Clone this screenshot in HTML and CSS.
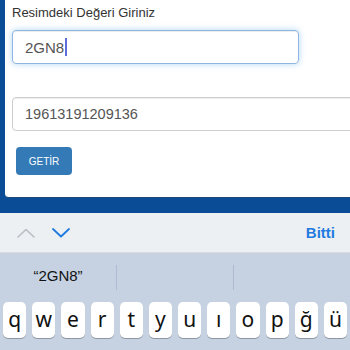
FILE: index.html
```html
<!DOCTYPE html>
<html>
<head>
<meta charset="utf-8">
<link rel="stylesheet" href="styles.css">
</head>
<body>
<div class="screen">
  <div class="frame">
    <div class="card">
      <div class="label">Resimdeki Değeri Giriniz</div>
      <div class="input focus"><span>2GN8</span><span class="caret"></span></div>
      <div class="input wide"><span>19613191209136</span></div>
      <div class="btn">GETİR</div>
    </div>
  </div>
  <div class="toolbar">
    <div class="arrows">
      <svg width="18" height="10" viewBox="0 0 18 10"><path d="M1 9 L9 1.5 L17 9" fill="none" stroke="#b9bdc3" stroke-width="1.6" stroke-linecap="round" stroke-linejoin="round"/></svg>
      <svg width="18" height="10" viewBox="0 0 18 10"><path d="M1 1 L9 8.5 L17 1" fill="none" stroke="#1f7ae0" stroke-width="1.8" stroke-linecap="round" stroke-linejoin="round"/></svg>
    </div>
    <div class="done">Bitti</div>
  </div>
  <div class="keyboard">
    <div class="suggest">
      <div class="sug">“2GN8”</div>
      <div class="sug sep"></div>
      <div class="sug sep"></div>
    </div>
    <div class="row">
      <div class="key">q</div><div class="key">w</div><div class="key">e</div><div class="key">r</div><div class="key">t</div><div class="key">y</div><div class="key">u</div><div class="key">ı</div><div class="key">o</div><div class="key">p</div><div class="key">ğ</div><div class="key">ü</div>
    </div>
  </div>
</div>
</body>
</html>
```

FILE: styles.css
```css
* { box-sizing: border-box; }
html, body { margin: 0; padding: 0; }
body {
  width: 350px;
  height: 350px;
  overflow: hidden;
  font-family: "Liberation Sans", Arial, sans-serif;
}
.screen { display: flex; flex-direction: column; width: 350px; height: 350px; }
.frame {
  background: #0a4d96;
  height: 213px;
  padding-left: 5px;
  padding-bottom: 15px;
}
.card {
  background: #fff;
  height: 198px;
  border-bottom-left-radius: 4px;
  border-bottom: 1px solid #1c4a7e;
  padding: 6px 0 0 7px;
  overflow: hidden;
}
.label {
  font-size: 13px;
  color: #333;
  line-height: 14px;
}
.input {
  margin-top: 10px;
  height: 34px;
  width: 287px;
  border: 1px solid #cfcfcf;
  border-radius: 4px;
  padding-left: 12px;
  display: flex;
  align-items: center;
  font-size: 15px;
  color: #555;
  box-shadow: inset 0 1px 1px rgba(0,0,0,0.075);
}
.input.focus {
  border-color: #8fb6e2;
  box-shadow: inset 0 1px 1px rgba(0,0,0,0.075), 0 0 6px rgba(102,175,233,0.5);
}
.caret {
  display: inline-block;
  width: 1.5px;
  height: 18px;
  background: #5b6fd6;
  margin-left: 1px;
}
.input.wide {
  margin-top: 33px;
  width: 360px;
  font-size: 14.5px;
}
.btn {
  margin-top: 16px;
  margin-left: 4px;
  width: 56px;
  height: 28px;
  background: #337ab7;
  border-radius: 4px;
  color: #fff;
  font-size: 10px;
  display: flex;
  align-items: center;
  justify-content: center;
}
.toolbar {
  height: 40px;
  background: #edf0f3;
  border-bottom: 1px solid #d8dde3;
  display: flex;
  align-items: center;
  justify-content: space-between;
  padding: 0 15px 0 17px;
}
.arrows { display: flex; gap: 17px; align-items: center; }
.done {
  color: #1f7ae0;
  font-weight: bold;
  font-size: 15px;
}
.keyboard {
  flex: 1;
  background: #c6d2e2;
  display: flex;
  flex-direction: column;
}
.suggest {
  height: 37px;
  display: flex;
  align-items: flex-end;
}
.sug {
  flex: 1;
  height: 25px;
  text-align: center;
  font-size: 15px;
  color: #111;
  line-height: 22px;
}
.sug.sep { border-left: 1px solid #aebbd0; }
.row {
  margin-top: 12px;
  display: flex;
  gap: 6px;
  padding: 0 3px;
}
.key {
  flex: 1;
  height: 36px;
  background: #fff;
  border-radius: 5px;
  box-shadow: 0 1px 0 #8e97a3;
  display: flex;
  align-items: center;
  justify-content: center;
  font-family: "Noto Sans", "Liberation Sans", sans-serif;
  font-size: 21px;
  color: #111;
  padding-bottom: 3px;
}
```
